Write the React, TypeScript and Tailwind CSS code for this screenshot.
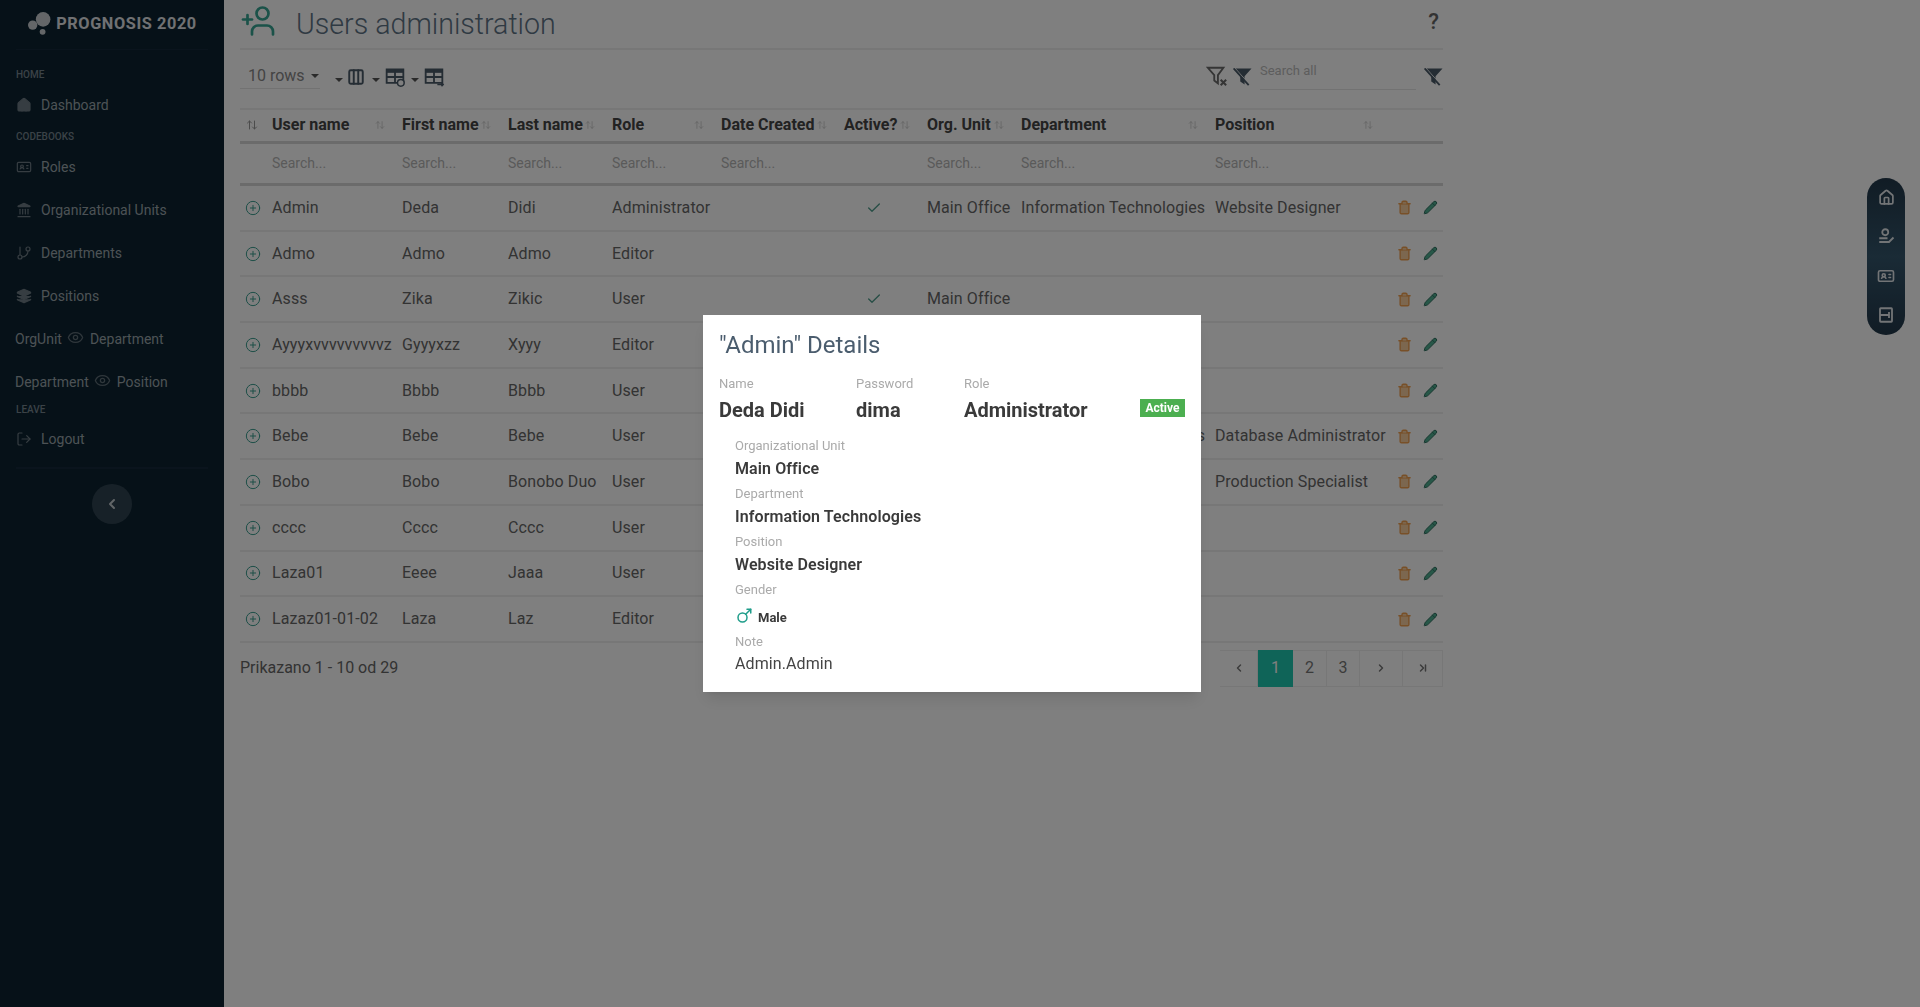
import { ArrowUpDown, Check, ChevronLast, ChevronLeft, ChevronRight, CirclePlus, GitBranch, House, IdCard, Layers, LogOut, Mars, Pencil, Trash2, UserPlus, Eye, Landmark, Columns3 } from 'lucide-react';

const rowGrid = 'grid grid-cols-[32px_130px_106px_104px_109px_123px_83px_94px_194px_175px_53px] items-center';

const columns = ['User name', 'First name', 'Last name', 'Role', 'Date Created', 'Active?', 'Org. Unit', 'Department', 'Position'];

const users = [
  { user: 'Admin', first: 'Deda', last: 'Didi', role: 'Administrator', active: true, org: 'Main Office', dept: 'Information Technologies', pos: 'Website Designer' },
  { user: 'Admo', first: 'Admo', last: 'Admo', role: 'Editor', active: false, org: '', dept: '', pos: '' },
  { user: 'Asss', first: 'Zika', last: 'Zikic', role: 'User', active: true, org: 'Main Office', dept: '', pos: '' },
  { user: 'Ayyyxvvvvvvvvvz', first: 'Gyyyxzz', last: 'Xyyy', role: 'Editor', active: false, org: '', dept: '', pos: '' },
  { user: 'bbbb', first: 'Bbbb', last: 'Bbbb', role: 'User', active: false, org: '', dept: '', pos: '' },
  { user: 'Bebe', first: 'Bebe', last: 'Bebe', role: 'User', active: false, org: '', dept: 'Information Technologies', pos: 'Database Administrator' },
  { user: 'Bobo', first: 'Bobo', last: 'Bonobo Duo', role: 'User', active: false, org: '', dept: '', pos: 'Production Specialist' },
  { user: 'cccc', first: 'Cccc', last: 'Cccc', role: 'User', active: false, org: '', dept: '', pos: '' },
  { user: 'Laza01', first: 'Eeee', last: 'Jaaa', role: 'User', active: false, org: '', dept: '', pos: '' },
  { user: 'Lazaz01-01-02', first: 'Laza', last: 'Laz', role: 'Editor', active: false, org: '', dept: '', pos: '' },
];

function SideHeading({ label }: { label: string }) {
  return <div className="h-[14px] text-[10px] leading-[14px] font-medium uppercase text-[#76858f]">{label}</div>;
}

function SideLink({ icon: Icon, label, solid = false }: { icon: typeof House; label: string; solid?: boolean }) {
  return (
    <div className="flex h-[43px] items-center gap-[9px] text-[14px] text-[#9aa5ab]">
      <Icon className={`h-4 w-4 -translate-y-[1px] text-[#6d7b84] ${solid ? 'fill-current' : ''}`} strokeWidth={1.8} />
      <span>{label}</span>
    </div>
  );
}

function LinkPair({ left, right }: { left: string; right: string }) {
  return (
    <div className="-ml-px flex h-[43px] items-center gap-[5px] text-[14px] text-[#9aa5ab]">
      <span>{left}</span>
      <Eye className="h-[17px] w-[17px] -translate-y-[2px] text-[#5f6e77]" strokeWidth={1.8} />
      <span className="ml-px">{right}</span>
    </div>
  );
}

function Sidebar() {
  return (
    <aside className="flex w-[224px] shrink-0 flex-col bg-[#0c2230] px-4">
      <div className="flex h-[50px] items-center justify-center gap-[3px] border-b border-[#14293a]">
        <svg viewBox="0 0 24 24" className="h-[25px] w-[26px] -translate-y-[1px]" fill="#c8cdd1">
          <circle cx="15" cy="8" r="7" />
          <circle cx="5" cy="13.5" r="4.5" />
          <circle cx="14.5" cy="20" r="2.8" />
        </svg>
        <span className="text-[16.3px] font-bold tracking-[0.6px] text-[#e0e3e6]">PROGNOSIS 2020</span>
      </div>
      <div className="mb-[2px] mt-[18px]">
        <SideHeading label="Home" />
      </div>
      <SideLink icon={House} label="Dashboard" solid />
      <div className="mt-[3px]">
        <SideHeading label="Codebooks" />
      </div>
      <div className="mt-[2px]">
        <SideLink icon={IdCard} label="Roles" />
      </div>
      <SideLink icon={Landmark} label="Organizational Units" solid />
      <SideLink icon={GitBranch} label="Departments" />
      <SideLink icon={Layers} label="Positions" solid />
      <LinkPair left="OrgUnit" right="Department" />
      <LinkPair left="Department" right="Position" />
      <div className="-mt-[1px] mb-[1px]">
        <SideHeading label="Leave" />
      </div>
      <SideLink icon={LogOut} label="Logout" />
      <div className="mt-[6px] border-t-2 border-[#14293a]" />
      <button className="mx-auto mt-[15px] flex h-10 w-10 items-center justify-center rounded-full bg-[#2f4350] text-[#c5ccd1]">
        <ChevronLeft className="h-4 w-4" strokeWidth={3} />
      </button>
    </aside>
  );
}

function ToolIcon({ children }: { children: React.ReactNode }) {
  return (
    <div className="flex items-center gap-[4px] text-[#4a5a68]">
      <span className="mt-[6px] h-0 w-0 border-x-[4px] border-t-[4px] border-x-transparent border-t-[#555]" />
      {children}
    </div>
  );
}

function TableBadgeIcon({ arrow = false }: { arrow?: boolean }) {
  return (
    <svg viewBox="0 0 24 24" className="h-[20px] w-[22px]" fill="none" stroke="currentColor" strokeWidth={2.2}>
      <path d="M2 3h20v16H2z" />
      <path d="M2 5h20" strokeWidth={4} />
      <path d="M2 12h20M12 3v16" />
      {arrow ? (
        <path d="M16 21h7m-2-2l2 2-2 2" strokeWidth={1.8} />
      ) : (
        <circle cx="19" cy="19" r="4" fill="#fff" strokeWidth={1.8} />
      )}
    </svg>
  );
}

function FunnelClear({ className }: { className: string }) {
  return (
    <svg viewBox="0 0 24 24" className={className} fill="none" stroke="currentColor" strokeWidth={2}>
      <path d="M2 3h17l-6 8v9l-4-3v-6L2 3z" />
      <path d="M16 16l6 6M22 16l-6 6" strokeWidth={2.2} />
    </svg>
  );
}

function FunnelOff({ className }: { className: string }) {
  return (
    <svg viewBox="0 0 24 24" className={className} fill="none" stroke="currentColor" strokeWidth={2.2}>
      <path d="M4 4h17l-7 8v8l-3-2v-6L4 4z" fill="currentColor" />
      <path d="M3 2l18 20" stroke="#fff" strokeWidth={1.2} />
      <path d="M2 3l18 20" />
    </svg>
  );
}

function Toolbar() {
  return (
    <div className="flex h-[58px] items-center justify-between pb-[5px]">
      <div className="flex items-center">
        <div className="flex h-[25px] w-[80px] items-center gap-[6px] border-b border-[#e4e4e4] pl-2 text-[16px] text-[#888]">
          10 rows
          <span className="h-0 w-0 border-x-[4px] border-t-[4px] border-x-transparent border-t-[#555]" />
        </div>
        <div className="ml-[15px] flex items-center gap-[7px]">
          <ToolIcon>
            <Columns3 className="h-[18px] w-[18px]" strokeWidth={2.6} />
          </ToolIcon>
          <ToolIcon>
            <TableBadgeIcon />
          </ToolIcon>
          <div className="-ml-[2px]">
            <ToolIcon>
              <TableBadgeIcon arrow />
            </ToolIcon>
          </div>
        </div>
      </div>
      <div className="flex -translate-y-[1px] items-center">
        <FunnelClear className="h-[22px] w-[22px] text-[#6a6a6a]" />
        <FunnelOff className="ml-[4px] h-[20px] w-[20px] text-[#4a5a68]" />
        <div className="ml-[8px] flex h-[28px] w-[156px] items-center border-b border-[#e4e4e4] pb-2 text-[13px] text-[#bbb]">
          Search all
        </div>
        <FunnelOff className="ml-[7px] h-[20px] w-[20px] text-[#4a5a68]" />
      </div>
    </div>
  );
}

function UserTable() {
  return (
    <div>
      <div className={`${rowGrid} h-[36px] border-y-2 border-b-[3px] border-t-[#eee] border-b-[#d6d6d6] pb-[2px] text-[16px] font-bold text-[#444]`}>
        <div className="pl-[6px] text-[#999]">
          <ArrowUpDown className="h-[12px] w-[12px]" />
        </div>
        {columns.map((name) => (
          <div key={name} className="flex items-center justify-between pr-[17px]">
            <span className="whitespace-nowrap">{name}</span>
            <ArrowUpDown className="h-[10px] w-[10px] shrink-0 text-[#c8c8c8]" />
          </div>
        ))}
        <div />
      </div>
      <div className={`${rowGrid} h-[42px] border-b-[3px] border-[#d6d6d6] text-[14px] text-[#b5b5b5]`}>
        <div />
        {columns.map((name) => (
          <div key={name}>{name === 'Active?' ? '' : 'Search...'}</div>
        ))}
        <div />
      </div>
      {users.map((u) => (
        <div key={u.user} className={`${rowGrid} h-[45.7px] border-b-2 border-[#eee] text-[16px] tracking-[0.1px] text-[#666]`}>
          <div className="pl-[5px] text-[#3a9d8f]">
            <CirclePlus className="h-[16px] w-[16px]" strokeWidth={1.5} />
          </div>
          <div className="whitespace-nowrap">{u.user}</div>
          <div>{u.first}</div>
          <div>{u.last}</div>
          <div>{u.role}</div>
          <div />
          <div className="pl-[22px] text-[#4f9c8c]">{u.active && <Check className="h-[16px] w-[16px]" strokeWidth={2} />}</div>
          <div className="whitespace-nowrap">{u.org}</div>
          <div className="whitespace-nowrap">{u.dept}</div>
          <div className="whitespace-nowrap">{u.pos}</div>
          <div className="flex items-center gap-[11px] pl-[7px]">
            <Trash2 className="h-[15px] w-[15px] fill-[#f8cf9f] text-[#f0a050]" strokeWidth={2.2} />
            <Pencil className="h-[15px] w-[15px] fill-[#4fae90] text-[#2f6f60]" strokeWidth={1.6} />
          </div>
        </div>
      ))}
    </div>
  );
}

function Pagination() {
  const cell = 'flex h-[37px] items-center justify-center border border-l-0 border-[#eee] text-[16px] text-[#777]';
  return (
    <div className="mt-[7px] flex items-center justify-between">
      <span className="text-[16px] text-[#666]">Prikazano 1 - 10 od 29</span>
      <div className="flex">
        <div className={`${cell} w-[38px]`}>
          <ChevronLeft className="h-3 w-3" strokeWidth={3} />
        </div>
        <div className="flex h-[37px] w-[35px] items-center justify-center bg-[#1ec8b0] text-[16px] text-white">1</div>
        <div className={`${cell} w-[34px]`}>2</div>
        <div className={`${cell} w-[33px]`}>3</div>
        <div className={`${cell} w-[43px]`}>
          <ChevronRight className="h-3 w-3" strokeWidth={3} />
        </div>
        <div className={`${cell} w-[40px]`}>
          <ChevronLast className="h-3 w-3" strokeWidth={3} />
        </div>
      </div>
    </div>
  );
}

function Field({ label, value }: { label: string; value: string }) {
  return (
    <div>
      <div className="h-[16px] text-[13px] leading-[16px] text-[#aaa]">{label}</div>
      <div className="-mt-[2px] h-[34px] text-[16px] font-semibold leading-[33px] tracking-[0.1px] text-[#3a3a3a]">{value}</div>
    </div>
  );
}

function DetailsModal() {
  return (
    <div className="fixed inset-0 flex items-center justify-center bg-black/50 pr-4">
      <div className="w-[498px] bg-white px-4 pt-[14px] pb-[13px] shadow-lg">
        <h2 className="text-[24px] leading-[32px] text-[#4b5d6e]">"Admin" Details</h2>
        <div className="mt-[15px] flex">
          <div className="w-[137px]">
            <div className="text-[13px] leading-[16px] text-[#aaa]">Name</div>
            <div className="mt-[5px] text-[20px] font-bold leading-[26px] text-[#3a3a3a]">Deda Didi</div>
          </div>
          <div className="w-[108px]">
            <div className="text-[13px] leading-[16px] text-[#aaa]">Password</div>
            <div className="mt-[5px] text-[20px] font-bold leading-[26px] text-[#3a3a3a]">dima</div>
          </div>
          <div className="flex-1">
            <div className="text-[13px] leading-[16px] text-[#aaa]">Role</div>
            <div className="mt-[5px] text-[20px] font-bold leading-[26px] text-[#3a3a3a]">Administrator</div>
          </div>
          <div className="mt-[23px] flex h-[18px] w-[45px] items-center justify-center bg-[#4caf50] text-[12px] font-bold text-white">Active</div>
        </div>
        <div className="mt-[15px] pl-4">
          <Field label="Organizational Unit" value="Main Office" />
          <Field label="Department" value="Information Technologies" />
          <Field label="Position" value="Website Designer" />
          <div className="h-[16px] text-[13px] leading-[16px] text-[#aaa]">Gender</div>
          <div className="mt-[4px] flex h-[32px] items-center gap-[5px] text-[13px] font-bold text-[#3a3a3a]">
            <Mars className="h-[18px] w-[18px] -translate-y-[2px] text-[#1f9d8a]" strokeWidth={2} />
            Male
          </div>
          <div className="h-[16px] text-[13px] leading-[16px] text-[#aaa]">Note</div>
          <div className="-mt-[1px] h-[30px] text-[16px] leading-[30px] tracking-[0.1px] text-[#444]">Admin.Admin</div>
        </div>
      </div>
    </div>
  );
}

function QuickPill() {
  return (
    <div className="fixed right-[15px] top-[178px] flex h-[157px] w-[38px] flex-col items-center justify-between rounded-full bg-linear-to-b from-[#22384a] via-[#34566c] to-[#22384a] py-[11px] text-[#e5e9ec]">
      <House className="h-[17px] w-[17px]" strokeWidth={2.4} />
      <svg viewBox="0 0 24 24" className="h-[18px] w-[18px]" fill="none" stroke="currentColor" strokeWidth={2.4}>
        <circle cx="11" cy="7" r="4" />
        <path d="M3 15h11M3 20h13l6-6" />
      </svg>
      <IdCard className="h-[18px] w-[20px]" strokeWidth={2.2} />
      <svg viewBox="0 0 24 24" className="h-[18px] w-[18px]" fill="none" stroke="currentColor" strokeWidth={2.4}>
        <rect x="4" y="3" width="16" height="18" rx="1" />
        <path d="M4 12h12M16 8v8" />
      </svg>
    </div>
  );
}

export default function App() {
  return (
    <div className="flex h-screen overflow-hidden bg-white font-['Roboto',sans-serif]">
      <Sidebar />
      <main className="w-[1219px] pl-4">
        <div className="flex h-[50px] items-center border-b-2 border-[#eee]">
          <UserPlus className="-translate-y-[3px] -scale-x-100 h-[36px] w-[36px] text-[#36a593]" strokeWidth={1.8} />
          <h1 className="ml-[20px] text-[28.6px] font-light text-[#5f7486]">Users administration</h1>
          <span className="ml-auto -translate-y-[3px] pr-[4px] text-[22px] font-medium text-[#666]">?</span>
        </div>
        <Toolbar />
        <UserTable />
        <Pagination />
      </main>
      <QuickPill />
      <DetailsModal />
    </div>
  );
}
